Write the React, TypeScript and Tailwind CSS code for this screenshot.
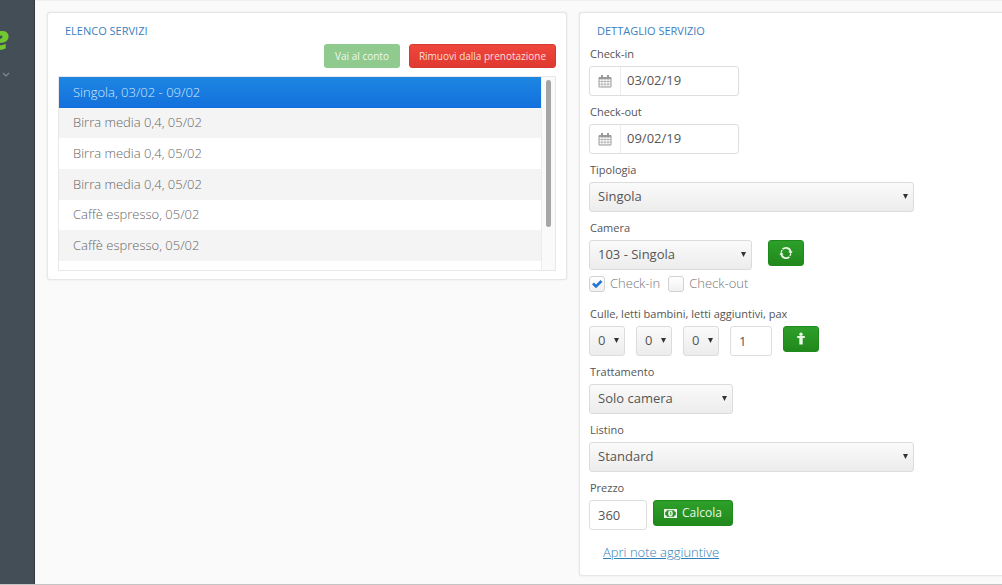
import React, { useState } from "react";

const services = [
  "Singola, 03/02 - 09/02",
  "Birra media 0,4, 05/02",
  "Birra media 0,4, 05/02",
  "Birra media 0,4, 05/02",
  "Caffè espresso, 05/02",
  "Caffè espresso, 05/02",
];

const greenButton =
  "flex h-[26px] items-center justify-center rounded-[3px] border border-[#1f8a1c] bg-linear-to-b from-[#2da02a] to-[#21881c] text-[#e9f7e6]";

function CalendarIcon() {
  return (
    <svg viewBox="0 0 14 14" className="h-[14px] w-[14px]" fill="none" stroke="#9a9a9a">
      <path d="M1 3.5h12v9.500H1z" />
      <path d="M1 4.300h12" strokeWidth="2" />
      <path d="M4 1v3M10 1v3" strokeWidth="2" />
      <path d="M1 7.500h12M1 10.200h12M4 5v8M7 5v8M10 5v8" strokeWidth="0.600" />
    </svg>
  );
}

function RefreshIcon() {
  return (
    <svg viewBox="0 0 14 14" className="h-[14px] w-[14px]" fill="none" stroke="currentColor" strokeWidth="1.8">
      <path d="M3.600 3.200A4.800 4.800 0 0 1 11.700 6.200M10.400 10.800A4.800 4.800 0 0 1 2.300 7.800" />
      <path d="M9.300 5.400h4.400L11.700 8zM4.700 8.600H.3L2.300 6z" fill="currentColor" stroke="none" />
      <path d="M2.300 6.100A4.800 4.800 0 0 1 3.200 4.100M11.700 7.900A4.800 4.800 0 0 1 10.800 9.900" strokeWidth="1.300" />
    </svg>
  );
}

function PersonIcon() {
  return (
    <svg viewBox="0 0 10 14" className="h-[14px] w-[10px]" fill="currentColor">
      <circle cx="5" cy="2.300" r="1.700" />
      <path d="M1.200 4h7.600v2H6.700V12.500H3.300V6H1.200z" />
    </svg>
  );
}

function MoneyIcon() {
  return (
    <svg viewBox="0 0 13 9" className="h-[9px] w-[13px]">
      <path
        fill="currentColor"
        fillRule="evenodd"
        d="M0 0h13v9H0zM3 1.200A2 2 0 0 1 1.200 3v3A2 2 0 0 1 3 7.800h7A2 2 0 0 1 11.800 6V3A2 2 0 0 1 10 1.200z"
      />
      <ellipse cx="6.500" cy="4.500" rx="2.300" ry="2.900" fill="currentColor" />
      <path d="M6 3.300h.8v2.700" stroke="#26931f" strokeWidth="0.900" fill="none" />
    </svg>
  );
}

function Select({ id, label, options, className }: { id: string; label?: string; options: string[]; className: string }) {
  return (
    <div className={`relative ${className}`}>
      <select
        id={id}
        aria-label={label}
        className="h-[30px] w-full appearance-none rounded-[3px] border border-[#dcdcdc] bg-linear-to-b from-[#fafafa] to-[#ececec] pl-2 text-[13px] text-[#555]"
      >
        {options.map((o) => (
          <option key={o}>{o}</option>
        ))}
      </select>
      <svg viewBox="0 0 5 5" className="pointer-events-none absolute top-[12px] right-[6px] h-[5px] w-[5px]" fill="#333">
        <path d="M0 0h5L2.500 5z" />
      </svg>
    </div>
  );
}

function Field({ id, label, children }: { id: string; label: string; children: React.ReactNode }) {
  return (
    <div className="flex flex-col gap-[3px]">
      <label htmlFor={id} className="px-px text-[11px] leading-[18px] text-[#555]">
        {label}
      </label>
      {children}
    </div>
  );
}

function DateField({ id, label, value }: { id: string; label: string; value: string }) {
  return (
    <Field id={id} label={label}>
      <div className="flex h-[30px] w-[150px] rounded-[3px] border border-[#dedede] bg-white">
        <span className="flex w-[31px] items-center justify-center border-r border-[#ececec]">
          <CalendarIcon />
        </span>
        <input id={id} defaultValue={value} className="min-w-0 flex-1 bg-transparent px-[6px] text-[13px] text-[#555] outline-none" />
      </div>
    </Field>
  );
}

function Tick({ label, initial }: { label: string; initial: boolean }) {
  const [on, setOn] = useState(initial);
  return (
    <label className="flex items-center gap-[5px] text-[13px] font-light text-[#777]">
      <span className="relative flex h-4 w-4">
        <input
          type="checkbox"
          checked={on}
          onChange={() => setOn(!on)}
          className="h-4 w-4 appearance-none rounded-[3px] border border-[#d2d2d2] bg-linear-to-b from-white to-[#f1f1f1]"
        />
        {on && (
          <svg viewBox="0 0 16 16" className="pointer-events-none absolute inset-0 h-4 w-4" fill="none" stroke="#2377d4" strokeWidth="2.600">
            <path d="M4 7.500l3 3 5.500-5.500" />
          </svg>
        )}
      </span>
      {label}
    </label>
  );
}

const panel = "rounded-[3px] border border-[#e6e6e6] bg-white shadow-[0_0_2px_rgba(0,0,0,0.1)]";

export default function App() {
  const [selected, setSelected] = useState(0);
  return (
    <div className="flex min-h-screen overflow-hidden border-b-2 border-[#c4c4c4] bg-[#fafafa] font-['Open_Sans',sans-serif]">
      <aside className="flex w-[35px] shrink-0 flex-col border-r border-[#33393f] bg-[#444e57]">
        <span className="mt-[17px] -ml-[10px] font-['Open_Sans',sans-serif] text-[33px] leading-[42px] font-extrabold text-[#72c82f] italic">e</span>
        <svg viewBox="0 0 8 6" className="mt-[13px] ml-[2px] h-[6px] w-[8px]" fill="none" stroke="#7f8990" strokeWidth="1.200">
          <path d="M1 1l3 3 3-3" />
        </svg>
      </aside>

      <main className="grid flex-1 grid-cols-[520fr_423fr] items-start gap-3 border-t border-[#f1f1f1] pt-[11px] pb-2 pl-3">
        <section className={`${panel} flex flex-col px-[10px] pt-[9px] pb-2`}>
          <h2 className="px-[7px] text-[11px] leading-[18px] font-normal text-[#3d80bd]">ELENCO SERVIZI</h2>
          <div className="mt-1 flex justify-end gap-[9px] text-[10px]">
            <button className="h-6 w-[76px] rounded-[3px] bg-[#90ca8e] text-[#eef9ee]">Vai al conto</button>
            <button className="h-6 w-[147px] rounded-[3px] border border-[#d33a32] bg-linear-to-b from-[#f0463c] to-[#df3930] text-[#fbdedb]">
              Rimuovi dalla prenotazione
            </button>
          </div>
          <div className="mt-2 flex h-[195px] items-start overflow-hidden border border-[#e8e8e8]">
            <ul className="grid h-[184px] flex-1 grid-rows-6">
              {services.map((s, i) => (
                <li key={i}>
                  <button
                    onClick={() => setSelected(i)}
                    className={`h-full w-full px-[14px] text-left text-[13px] font-light ${
                      i === selected
                        ? "bg-linear-to-b from-[#1f86e2] to-[#1270dc] text-[#d5e8fb]"
                        : i % 2
                          ? "bg-[#f4f4f4] text-[#666]"
                          : "bg-white text-[#666]"
                    }`}
                  >
                    {s}
                  </button>
                </li>
              ))}
            </ul>
            <div className="flex h-full w-[14px] justify-center border-l border-[#ececec] bg-[#fafafa] pt-[3px]">
              <div className="h-[147px] w-[5px] rounded-full bg-[#a6a6a6]" />
            </div>
          </div>
        </section>

        <section className="flex flex-col rounded-l-[3px] border-y border-l border-[#e6e6e6] bg-white pt-[9px] pb-[13px] pl-[9px] shadow-[0_0_2px_rgba(0,0,0,0.1)]">
          <h2 className="px-2 text-[11px] leading-[18px] font-normal text-[#3d80bd]">DETTAGLIO SERVIZIO</h2>
          <form className="mt-[5px] flex flex-col gap-[7px]" onSubmit={(e) => e.preventDefault()}>
            <DateField id="checkin" label="Check-in" value="03/02/19" />
            <DateField id="checkout" label="Check-out" value="09/02/19" />
            <Field id="tipologia" label="Tipologia">
              <Select id="tipologia" options={["Singola"]} className="w-[325px]" />
            </Field>
            <div>
              <Field id="camera" label="Camera">
                <div className="flex items-start gap-4">
                  <Select id="camera" options={["103 - Singola"]} className="w-[163px]" />
                  <button aria-label="Aggiorna" className={`${greenButton} w-9`}>
                    <RefreshIcon />
                  </button>
                </div>
              </Field>
              <div className="flex h-7 items-center gap-2">
                <Tick label="Check-in" initial={true} />
                <Tick label="Check-out" initial={false} />
              </div>
            </div>
            <Field id="culle" label="Culle, letti bambini, letti aggiuntivi, pax">
              <div className="flex items-start gap-[11px]">
                <Select id="culle" options={["0"]} className="w-9" />
                <Select id="bambini" label="Letti bambini" options={["0"]} className="w-9" />
                <Select id="aggiuntivi" label="Letti aggiuntivi" options={["0"]} className="w-9" />
                <input
                  aria-label="Pax"
                  defaultValue="1"
                  className="h-[30px] w-[42px] rounded-[3px] border border-[#dedede] bg-white px-2 text-[13px] text-[#555]"
                />
                <button aria-label="Ospiti" className={`${greenButton} w-9`}>
                  <PersonIcon />
                </button>
              </div>
            </Field>
            <Field id="trattamento" label="Trattamento">
              <Select id="trattamento" options={["Solo camera"]} className="w-36" />
            </Field>
            <Field id="listino" label="Listino">
              <Select id="listino" options={["Standard"]} className="w-[325px]" />
            </Field>
            <Field id="prezzo" label="Prezzo">
              <div className="flex items-start gap-[6px]">
                <input
                  id="prezzo"
                  defaultValue="360"
                  className="h-[30px] w-[58px] rounded-[3px] border border-[#dedede] bg-white px-2 text-[13px] text-[#555]"
                />
                <button className={`${greenButton} w-20 gap-[5px] text-[12px]`}>
                  <MoneyIcon />
                  Calcola
                </button>
              </div>
            </Field>
          </form>
          <a href="#note" className="mt-3 self-start px-[14px] text-[13px] leading-5 font-light text-[#2f7fb8] underline">
            Apri note aggiuntive
          </a>
        </section>
      </main>
    </div>
  );
}
